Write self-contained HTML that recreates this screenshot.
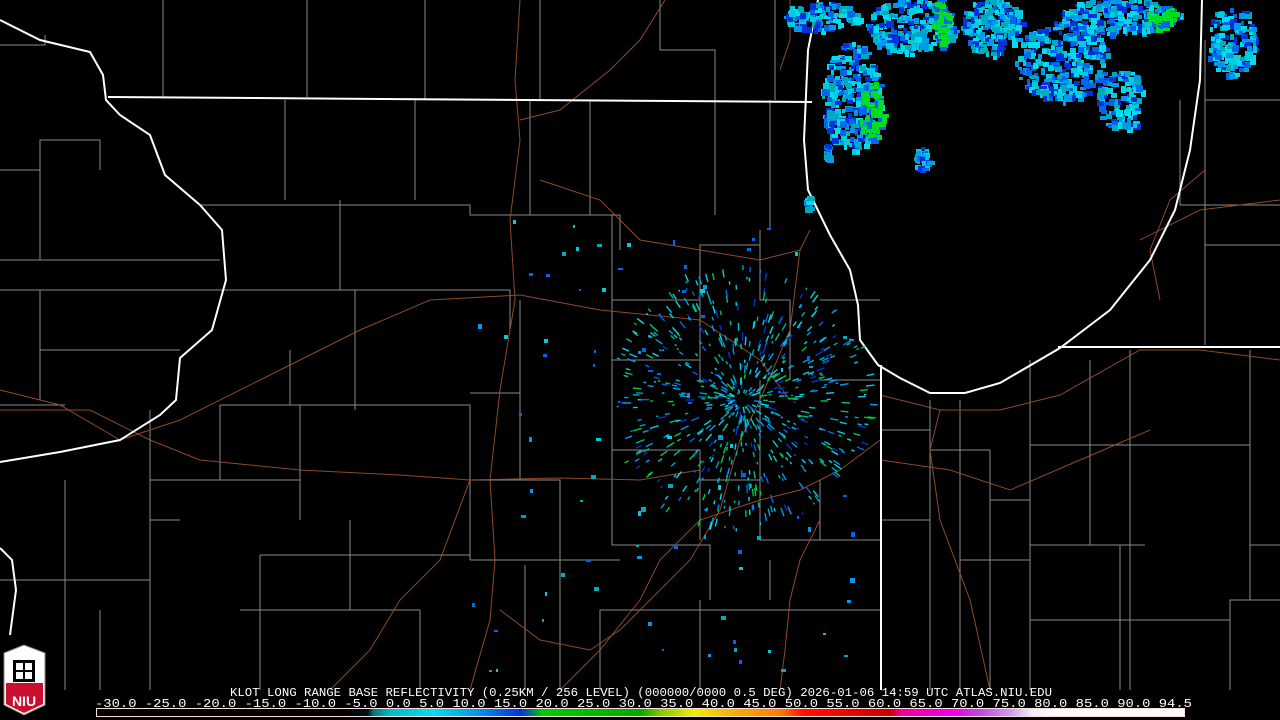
<!DOCTYPE html>
<html><head><meta charset="utf-8"><style>
html,body{margin:0;padding:0;background:#000;width:1280px;height:720px;overflow:hidden}
svg{display:block}
.t{font-family:"Liberation Mono","DejaVu Sans Mono",monospace;fill:#fff;font-size:11.5px}
</style></head><body>
<svg id="s" width="1280" height="720" viewBox="0 0 1280 720" xmlns="http://www.w3.org/2000/svg">
<defs>
<linearGradient id="cb" x1="96" x2="1184" gradientUnits="userSpaceOnUse">
<stop offset="0" stop-color="#000"/><stop offset="0.23" stop-color="#000"/>
<stop offset="0.25" stop-color="#012"/><stop offset="0.255" stop-color="#077"/>
<stop offset="0.27" stop-color="#0bc"/><stop offset="0.31" stop-color="#0de"/>
<stop offset="0.35" stop-color="#09e"/><stop offset="0.39" stop-color="#03d"/>
<stop offset="0.40" stop-color="#077"/><stop offset="0.41" stop-color="#0c0"/>
<stop offset="0.5" stop-color="#0a0"/><stop offset="0.52" stop-color="#8c0"/>
<stop offset="0.55" stop-color="#ee0"/><stop offset="0.58" stop-color="#eb0"/>
<stop offset="0.63" stop-color="#f70"/><stop offset="0.65" stop-color="#f10"/>
<stop offset="0.73" stop-color="#c00"/><stop offset="0.74" stop-color="#e09"/>
<stop offset="0.79" stop-color="#e0e"/><stop offset="0.81" stop-color="#b4d"/>
<stop offset="0.84" stop-color="#c9e"/><stop offset="0.86" stop-color="#eef"/>
<stop offset="0.88" stop-color="#fff"/><stop offset="1" stop-color="#fff"/>
</linearGradient>
</defs>
<g id="cty" stroke="#8a8a8a" stroke-width="1" fill="none">
<path d="M163 0V97M307 0V97M425 0V100M540 0V100M660 0V50H715V100M775 0V100M0 45H45V35M0 170H40V140H100M40 170V260M0 260H220M0 290H40V400M40 350H180M0 405H65M100 140V170"/>
<path d="M285 100V200M415 100V200M530 100V215M590 100V215M715 100V215M770 100V230M200 205H470V215H620V250M340 200V290M355 290H510V330M40 290H355M290 350V405M355 290V410M220 405H470V560M220 405V480M150 410V690M150 480H300V520M300 405V520M470 393H520V480M520 300V480M612 215V545M612 300H700V245H760M700 245V380M760 230V300H790M612 360H700M612 450H700V540M700 480H760V540H800M760 480V380M470 480H560V565M350 520V610M260 555H470M240 610H420M470 560H620M560 565V690M525 565V690M612 545H710V600M700 600V690M600 690V610H880M770 560V600M800 540H880M820 480V540H880M820 380H880M820 300H880M790 300V380M180 520H150M65 480V690M0 580H150M260 555V690M100 610V690M420 610V690"/>
<path d="M930 400V690M960 400V690M990 450V690M1030 360V690M1090 360V530M1130 350V690M1145 445H1250V545H1280M1030 445H1145M1030 545H1145M1090 530V545M1030 620H1230V600H1280M1230 600V690M1250 350V600M990 500H1030M960 560H1030M1120 545V690M1180 100V205H1280M1205 40V345M1205 245H1280M1205 100H1280M930 450H990M880 430H930M880 520H930M990 620V690"/>
</g>
<g stroke="#a0522d" stroke-width="1" fill="none" opacity="0.9">
<path d="M0 390L60 405L120 440L180 420L260 380L360 330L430 300L520 295L600 310L700 320L760 360L790 400"/>
<path d="M0 410L90 410L150 440L200 460L300 470L400 475L470 480L560 478L640 480L700 470"/>
<path d="M520 0L515 80L520 140L510 220L515 300L500 390L490 480L495 560L490 620L470 690"/>
<path d="M665 0L640 40L610 70L560 110L520 120"/>
<path d="M540 180L600 200L640 240L700 250L760 260L800 250L810 230"/>
<path d="M800 250L790 330L760 400L740 440L720 510L690 560L650 600L620 630L590 650L540 640L500 610"/>
<path d="M820 520L800 560L790 600L785 650L780 690"/>
<path d="M880 395L940 410L1000 410L1060 395L1140 350L1200 350L1280 360"/>
<path d="M940 410L930 450L940 520L970 600L990 690"/>
<path d="M880 460L950 470L1010 490L1080 460L1150 430"/>
<path d="M1160 300L1150 250L1170 200L1205 170"/>
<path d="M1140 240L1200 210L1280 200"/>
<path d="M780 70L790 40L790 0"/>
<path d="M330 690L370 650L400 600L440 560L470 480"/>
<path d="M560 690L600 650L640 600L660 560L700 520L760 500L800 490L840 470L880 440"/>
</g>
<g stroke="#fff" stroke-width="2" fill="none">
<path d="M0 20L40 40L90 52L103 75L106 100L120 115L150 135L165 175L200 205L222 230L226 280L212 330L180 358L176 400L160 415L120 440L60 452L0 462"/>
<path d="M108 97L812 102"/>
<path d="M818 0L808 50L804 140L808 190L830 235L850 270L858 305L860 340L878 365L900 378L930 393L965 393L1000 383L1060 348L1110 310L1150 260L1175 210L1190 150L1200 80L1202 0"/>
<path d="M881 365V690"/>
<path d="M1058 347H1280"/>
<path d="M0 548L12 560L16 590L10 635"/>
</g>
<g id="rad"></g>
<text class="t" x="230" y="696" textLength="822" lengthAdjust="spacingAndGlyphs">KLOT LONG RANGE BASE REFLECTIVITY (0.25KM / 256 LEVEL) (000000/0000 0.5 DEG) 2026-01-06 14:59 UTC  ATLAS.NIU.EDU</text>
<text class="t" x="95" y="707" textLength="1097" lengthAdjust="spacingAndGlyphs">-30.0 -25.0 -20.0 -15.0 -10.0 -5.0  0.0   5.0  10.0  15.0  20.0  25.0  30.0  35.0  40.0  45.0  50.0  55.0  60.0  65.0  70.0  75.0  80.0  85.0  90.0 94.5</text>
<rect x="96.5" y="708.5" width="1088" height="8" fill="url(#cb)" stroke="#fdd" stroke-width="1"/>
<g transform="translate(4,645)">
<path d="M0 8L20 0L41 8V60L20 70L0 60Z" fill="#fff" stroke="#888"/>
<path d="M2 38H39V59L20 68L2 59Z" fill="#c8102e"/>
<rect x="9" y="15" width="22" height="22" fill="#000"/>
<rect x="12" y="18" width="16" height="16" fill="#fff"/>
<path d="M20 18V34M12 26H28" stroke="#000" stroke-width="2"/>
<text x="20" y="61" text-anchor="middle" font-family="Liberation Sans,sans-serif" font-weight="bold" font-size="14" fill="#fff">NIU</text>
</g>
</svg>
<script>
(function(){
var g=document.getElementById('rad'),s=12345;
function r(){s=(s*16807)%2147483647;return s/2147483647;}
var cols=['#0cd','#0ab','#09e','#06e','#0cd','#09e','#0b8','#0de','#03d','#0c3'];
var h='';
for(var i=0;i<700;i++){var a=r()*6.283,d=Math.pow(r(),0.8)*130;var x=742+Math.cos(a)*d,y=400+Math.sin(a)*d;
var l=2+r()*7;var x2=x+Math.cos(a)*l,y2=y+Math.sin(a)*l;
h+='<line x1="'+x.toFixed(1)+'" y1="'+y.toFixed(1)+'" x2="'+x2.toFixed(1)+'" y2="'+y2.toFixed(1)+'" stroke="'+cols[Math.floor(r()*cols.length)]+'" stroke-width="1.4"/>';}
for(var j=0;j<90;j++){var x=460+r()*400,y=220+r()*460;h+='<rect x="'+x.toFixed(0)+'" y="'+y.toFixed(0)+'" width="'+(2+r()*3).toFixed(0)+'" height="'+(2+r()*3).toFixed(0)+'" fill="'+cols[Math.floor(r()*4)]+'"/>';}
h+='<circle cx="742" cy="400" r="7" fill="#000"/>';
// speckled precip blobs: [cx,cy,rx,ry,n]
var bl=[[820,15,40,14,120],[850,95,30,55,300],[870,110,12,30,80,1],[910,25,45,28,250],[940,20,8,25,60,1],[990,25,30,28,200],[1060,60,45,40,300],[1120,15,60,18,250],[1160,15,15,12,50,1],[1230,40,25,35,150],[1120,100,25,30,120],[920,158,7,12,40],[825,150,4,8,15],[806,202,4,6,12]];
var bc=['#0cd','#09e','#06e','#0ab','#03d','#0de'];
bl.forEach(function(b){for(var k=0;k<b[4];k++){var a=r()*6.283,d=Math.sqrt(r());var x=b[0]+Math.cos(a)*d*b[2],y=b[1]+Math.sin(a)*d*b[3];
var c=b[5]?(r()<0.7?'#0d2':'#06e'):bc[Math.floor(r()*bc.length)];
h+='<rect x="'+x.toFixed(0)+'" y="'+y.toFixed(0)+'" width="'+(3+r()*5).toFixed(0)+'" height="'+(3+r()*4).toFixed(0)+'" fill="'+c+'"/>';}});
h+='<rect x="0" y="0" width="0" height="0"/>';
g.innerHTML=h;})();
</script>
</body></html>
